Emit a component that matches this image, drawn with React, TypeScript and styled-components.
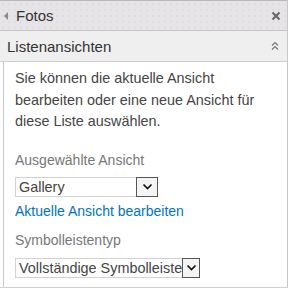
import React from "react";
import styled, { createGlobalStyle } from "styled-components";

const GlobalStyle = createGlobalStyle`
    html, body {
        margin: 0;
        padding: 0;
        background: #ffffff;
    }
    body {
        font-family: "Liberation Sans", Arial, sans-serif;
        width: 289px;
        height: 289px;
        overflow: hidden;
    }
`;

const Panel = styled.div`
    width: 287px;
    height: 287px;
    border-right: 1px solid #c6c6c6;
    border-bottom: 1px solid #d0d0d0;
    display: flex;
    flex-direction: column;
`;

const TitleBar = styled.div`
    height: 29px;
    display: flex;
    align-items: center;
    border-top: 1px solid #b8b8b8;
    border-bottom: 1px solid #c4c4c4;
    background-color: #e6e4e6;
    background-image: radial-gradient(#d6d4d6 0.6px, transparent 0.8px);
    background-size: 6px 6px;
    padding: 0 6px 0 4px;
`;

const BackArrow = styled.span`
    width: 0;
    height: 0;
    border-top: 4px solid transparent;
    border-bottom: 4px solid transparent;
    border-right: 4px solid #8a8a8a;
    margin-right: 8px;
    margin-top: 1px;
`;

const TitleText = styled.span`
    flex: 1;
    font-size: 15px;
    color: #333;
`;

const SectionHeader = styled.div`
    height: 30px;
    display: flex;
    align-items: center;
    background: #efefef;
    border-bottom: 1px solid #cfcfcf;
    padding: 0 8px 0 7px;
`;

const SectionTitle = styled.span`
    flex: 1;
    font-size: 15px;
    color: #333;
`;

const Body = styled.div`
    flex: 1;
    border-left: 1px solid #c8c8c8;
    margin-left: 3px;
    padding: 6px 0 0 11px;
`;

const Intro = styled.p`
    width: 248px;
    margin: 0;
    font-size: 14.4px;
    line-height: 21.5px;
    color: #444;
`;

const Label = styled.div<{ $top: number }>`
    margin-top: ${(p) => p.$top}px;
    font-size: 14px;
    line-height: 16px;
    color: #777;
`;

const SelectBox = styled.div<{ $width: number; $top: number }>`
    margin-top: ${(p) => p.$top}px;
    width: ${(p) => p.$width}px;
    height: 20px;
    display: flex;
    align-items: stretch;
    border: 1px solid #d2d2d2;
    box-sizing: border-box;
`;

const SelectValue = styled.span`
    flex: 1;
    font-size: 14.4px;
    line-height: 18px;
    color: #444;
    padding-left: 3px;
    white-space: nowrap;
`;

const DropButton = styled.span`
    width: 20px;
    margin: -1px -1px -1px 0;
    border: 1px solid #555;
    background: #f4f4f4;
    display: flex;
    align-items: center;
    justify-content: center;
`;

const Link = styled.a`
    display: block;
    margin-top: 6px;
    font-size: 14px;
    line-height: 16px;
    color: #0072c6;
    text-decoration: none;
`;

const Chevron = () => (
    <svg width="11" height="7" viewBox="0 0 11 7">
        <path d="M1.5 1.5 L5.5 5.5 L9.5 1.5" fill="none" stroke="#111" strokeWidth="1.7" />
    </svg>
);

const CloseIcon = () => (
    <svg width="10" height="10" viewBox="0 0 10 10">
        <path d="M1.5 1.5 L8.5 8.5 M8.5 1.5 L1.5 8.5" stroke="#666" strokeWidth="2" />
    </svg>
);

const CollapseIcon = () => (
    <svg width="8" height="10" viewBox="0 0 8 10">
        <path d="M1 4.5 L4 1.5 L7 4.5 M1 8.5 L4 5.5 L7 8.5" fill="none" stroke="#777" strokeWidth="1.2" />
    </svg>
);

export default function App() {
    return (
        <>
            <GlobalStyle />
            <Panel>
                <TitleBar>
                    <BackArrow />
                    <TitleText>Fotos</TitleText>
                    <CloseIcon />
                </TitleBar>
                <SectionHeader>
                    <SectionTitle>Listenansichten</SectionTitle>
                    <CollapseIcon />
                </SectionHeader>
                <Body>
                    <Intro>
                        Sie können die aktuelle Ansicht bearbeiten oder eine neue Ansicht für diese Liste auswählen.
                    </Intro>
                    <Label $top={19}>Ausgewählte Ansicht</Label>
                    <SelectBox $width={143} $top={9}>
                        <SelectValue>Gallery</SelectValue>
                        <DropButton><Chevron /></DropButton>
                    </SelectBox>
                    <Link href="#">Aktuelle Ansicht bearbeiten</Link>
                    <Label $top={13}>Symbolleistentyp</Label>
                    <SelectBox $width={185} $top={10}>
                        <SelectValue>Vollständige Symbolleiste</SelectValue>
                        <DropButton><Chevron /></DropButton>
                    </SelectBox>
                </Body>
            </Panel>
        </>
    );
}
